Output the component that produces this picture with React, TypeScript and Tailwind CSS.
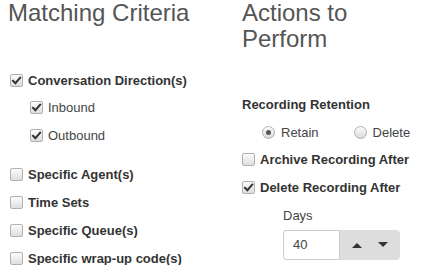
import React from "react";

const font = { fontFamily: '"Liberation Sans", Arial, sans-serif' };

function Check({ checked }: { checked?: boolean }) {
  return (
    <span className="relative inline-block w-[13px] h-[13px] shrink-0 rounded-[2px] border border-[#b0b0b0] bg-gradient-to-b from-[#fcfcfc] to-[#dedede]">
      {checked && (
        <svg viewBox="0 0 13 13" className="absolute left-[-1px] top-[-1px] w-[13px] h-[13px]">
          <path d="M3 6.8 L5.4 9.2 L10.2 3.6" fill="none" stroke="#333" strokeWidth="2" strokeLinecap="square" />
        </svg>
      )}
    </span>
  );
}

function Radio({ checked }: { checked?: boolean }) {
  return (
    <span className="relative inline-flex items-center justify-center w-[13px] h-[13px] shrink-0 rounded-full border border-[#b0b0b0] bg-gradient-to-b from-[#fcfcfc] to-[#dadada]">
      {checked && <span className="block w-[5px] h-[5px] rounded-full bg-[#555]" />}
    </span>
  );
}

function Row({ checked, bold, children, className }: { checked?: boolean; bold?: boolean; children: React.ReactNode; className?: string }) {
  return (
    <div className={`flex items-center h-[28px] gap-[5px] ${className ?? ""}`}>
      <Check checked={checked} />
      <span className={`text-[13px] ${bold ? "font-bold text-[#333]" : "text-[#444]"}`}>{children}</span>
    </div>
  );
}

export default function App() {
  return (
    <div style={font} className="w-[430px] h-[265px] overflow-hidden bg-white flex text-[#444]">
      <div className="w-[242px] pl-[8px] shrink-0">
        <h3 className="text-[24px] leading-[1.1] text-[#555] font-normal">Matching Criteria</h3>
        <div className="mt-[40px] pl-[2px]">
          <Row checked bold>Conversation Direction(s)</Row>
          <div className="pl-[20px] -mt-[1px]">
            <Row checked>Inbound</Row>
            <Row checked>Outbound</Row>
          </div>
          <div className="mt-[11px]">
            <Row bold>Specific Agent(s)</Row>
            <Row bold>Time Sets</Row>
            <Row bold>Specific Queue(s)</Row>
            <Row bold>Specific wrap-up code(s)</Row>
          </div>
        </div>
      </div>
      <div className="w-[188px]">
        <h3 className="text-[24px] leading-[1.1] text-[#555] font-normal w-[150px]">Actions to Perform</h3>
        <div className="mt-[38px] h-[28px] flex items-center text-[13px] font-bold text-[#333]">Recording Retention</div>
        <div className="flex items-center h-[27px] pl-[20px] text-[13px] text-[#444]">
          <Radio checked />
          <span className="ml-[6px]">Retain</span>
          <span className="ml-[35px] flex"><Radio /></span>
          <span className="ml-[6px]">Delete</span>
        </div>
        <Row bold>Archive Recording After</Row>
        <Row checked bold>Delete Recording After</Row>
        <div className="pl-[41px]">
          <div className="h-[28px] flex items-center text-[13px] text-[#444]">Days</div>
          <div className="flex h-[30px] w-[117px]">
            <div className="w-[57px] h-full border border-[#ccc] rounded-l-[3px] flex items-center pl-[9px] text-[13px] text-[#444] bg-white">40</div>
            <div className="flex-1 h-full bg-[#dddddd] rounded-r-[4px] flex items-center justify-around px-[4px]">
              <svg width="10" height="6" viewBox="0 0 10 6"><path d="M0 6 L5 1 L10 6 Z" fill="#333" /></svg>
              <svg width="10" height="6" viewBox="0 0 10 6"><path d="M0 0 L5 5 L10 0 Z" fill="#333" /></svg>
            </div>
          </div>
        </div>
      </div>
    </div>
  );
}
